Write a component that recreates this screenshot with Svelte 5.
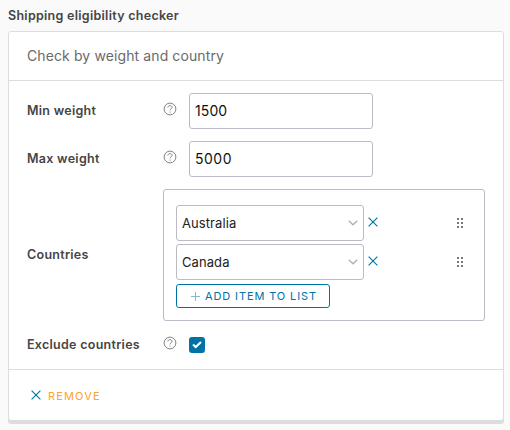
<script>
  let minWeight = $state('1500');
  let maxWeight = $state('5000');
  let exclude = $state(true);
  const countries = ['Australia', 'Canada'];
</script>

{#snippet help()}
  <svg class="help" width="14" height="14" viewBox="0 0 14 14" fill="none" stroke="#747474">
    <circle cx="7" cy="7" r="5.9" stroke-width="0.9" />
    <path d="M4.9 5.4C5 4.2 5.9 3.6 7 3.6S9.1 4.3 9.1 5.3C9.1 6.6 7.1 6.7 7.1 8.3" stroke-width="0.9" />
    <circle cx="7.1" cy="10" r="0.6" fill="#747474" stroke="none" />
  </svg>
{/snippet}

{#snippet cross()}
  <svg class="cross" width="10" height="10" viewBox="0 0 10 10" fill="none" stroke="#0077a8" stroke-width="1.15">
    <path d="M.6.6 9.4 9.4M9.4.6.6 9.4" />
  </svg>
{/snippet}

<div class="page">
  <div class="title">Shipping eligibility checker</div>
  <div class="card">
    <header>Check by weight and country</header>
    <div class="body">
      <div class="row">
        <div class="label">Min weight</div>
        <div class="tip">{@render help()}</div>
        <input class="number" type="text" bind:value={minWeight} />
      </div>
      <div class="row">
        <div class="label">Max weight</div>
        <div class="tip">{@render help()}</div>
        <input class="number wide" type="text" bind:value={maxWeight} />
      </div>
      <div class="row">
        <div class="label">Countries</div>
        <div class="list">
          {#each countries as country}
            <div class="item">
              <div class="select">
                <span>{country}</span>
                <svg width="10" height="6" viewBox="0 0 10 6" fill="none" stroke="#b0b0b0" stroke-width="1.3">
                  <path d="M.8.7 5 4.8 9.2.7" />
                </svg>
              </div>
              {@render cross()}
              <svg class="grip" width="6" height="10" viewBox="0 0 6 10" fill="#777">
                <path d="M0 0h2v2H0zM4 0h2v2H4zM0 4h2v2H0zM4 4h2v2H4zM0 8h2v2H0zM4 8h2v2H4z" />
              </svg>
            </div>
          {/each}
          <button class="add">
            <svg width="9" height="9" viewBox="0 0 9 9" stroke="#7fbbd3" stroke-width="1">
              <path d="M4.5 0v9M0 4.5h9" />
            </svg>
            <span>ADD ITEM TO LIST</span>
          </button>
        </div>
      </div>
      <div class="row short">
        <div class="label">Exclude countries</div>
        <div class="tip">{@render help()}</div>
        <button class="check" class:on={exclude} aria-label="Exclude countries" onclick={() => (exclude = !exclude)}>
          {#if exclude}
            <svg width="16" height="16" viewBox="0 0 16 16" fill="none" stroke="#fff" stroke-width="2.1">
              <path d="M4 7.6 6.7 10.1 12 4.9" />
            </svg>
          {/if}
        </button>
      </div>
    </div>
    <footer>
      <button class="remove">{@render cross()}<span>REMOVE</span></button>
    </footer>
  </div>
</div>

<style>
  :global(body) { background: #fafafa; }
  .page {
    box-sizing: border-box;
    height: 430px;
    padding: 0 6px 0 8px;
    font-family: Inter, "Liberation Sans", sans-serif;
    font-size: 13px;
    color: #454545;
    white-space: nowrap;
  }
  * { box-sizing: border-box; }
  .title { height: 31px; line-height: 32px; font-weight: 600; font-size: 12.5px; letter-spacing: 0.28px; }
  .card {
    width: 496px;
    height: 390px;
    border: 1px solid #ddd;
    border-radius: 3px;
    box-shadow: 0 3px 0 #ddd;
    background: #fff;
  }
  header {
    height: 49px;
    padding-left: 18px;
    border-bottom: 1px solid #ddd;
    line-height: 48px;
    font-size: 14px;
    letter-spacing: 0.11px;
    color: #6a6a6a;
  }
  .body {
    display: flex;
    flex-direction: column;
    gap: 12px;
    height: 289px;
    padding: 12px 18px;
    border-bottom: 1px solid #ddd;
  }
  .row { display: flex; align-items: center; }
  .short { height: 24px; }
  .label {
    width: 136px;
    font-weight: 600;
    font-size: 12.5px;
    line-height: 20px;
    letter-spacing: 0.28px;
  }
  .tip { width: 26px; height: 18px; }
  .help { display: block; }
  .number {
    width: 184px;
    height: 36px;
    padding: 0 5px 2px;
    border: 1px solid #bbbbc6;
    border-radius: 3px;
    background: #fff;
    font: 14px Inter, "Liberation Sans", sans-serif;
    letter-spacing: 0.1px;
    color: #111;
    outline: none;
  }
  .wide { letter-spacing: 0.5px; }
  .list {
    display: flex;
    flex-direction: column;
    width: 322px;
    height: 132px;
    padding: 15px 12px 0;
    border: 1px solid #bbbbc6;
    border-radius: 3px;
  }
  .item { display: flex; align-items: center; margin-bottom: 3px; }
  .select {
    display: flex;
    align-items: center;
    justify-content: space-between;
    width: 188px;
    height: 36px;
    padding: 0 5px;
    margin-right: 4px;
    border: 1px solid #bbbbc6;
    border-radius: 3px;
    letter-spacing: 0.08px;
    color: #222;
  }
  .select span { padding-bottom: 1px; }
  .cross { display: block; flex: none; }
  .item .cross { margin-bottom: 2px; }
  .grip { margin-left: 79px; }
  button { font: inherit; padding: 0; background: none; border: 0; }
  .add {
    display: flex;
    align-items: center;
    width: 154px;
    height: 24px;
    margin-top: 1px;
    padding-left: 14px;
    gap: 5px;
    border: 1px solid #0072a3;
    border-radius: 3px;
    font-size: 11px;
    letter-spacing: 0.88px;
    color: #0072a3;
  }
  .add svg { margin-top: 1px; }
  .check { width: 16px; height: 16px; border: 1px solid #0072a3; border-radius: 3px; }
  .check.on { border: 0; background: #0072a3; }
  .check svg { display: block; }
  footer { display: flex; align-items: center; height: 50px; padding-left: 22px; }
  .remove {
    display: flex;
    align-items: center;
    gap: 7px;
    font-size: 11px;
    letter-spacing: 1.15px;
    color: #fba42c;
  }
  .remove span { padding-top: 2px; }
</style>
